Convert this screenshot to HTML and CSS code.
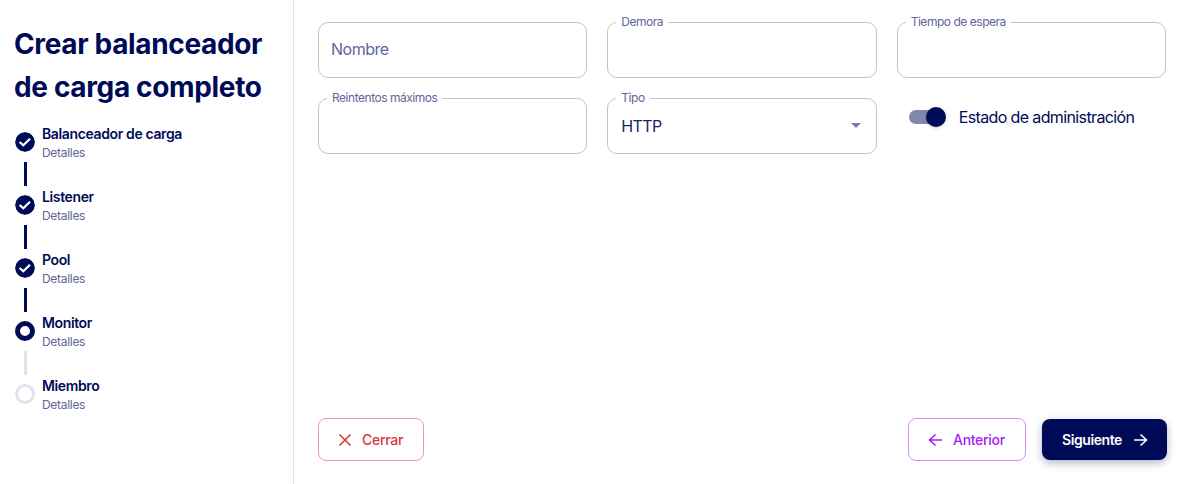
FILE: index.html
```html
<!DOCTYPE html>
<html lang="es">
<head>
<meta charset="utf-8">
<title>Crear balanceador de carga completo</title>
<link rel="stylesheet" href="styles.css">
</head>
<body>
<div class="app">
  <aside class="sidebar">
    <h1 class="title">Crear balanceador de carga completo</h1>
    <ol class="steps">
      <li class="step">
        <div class="step-head">
          <svg class="step-icon" viewBox="0 0 20 20"><circle cx="10" cy="10" r="10" fill="#000b58"/><path d="M4.6 10l3.7 3.3L15 6.8" fill="none" stroke="#fff" stroke-width="2.2"/></svg>
          <div class="step-text"><span class="step-name">Balanceador de carga</span><span class="step-sub">Detalles</span></div>
        </div>
        <div class="connector"></div>
      </li>
      <li class="step">
        <div class="step-head">
          <svg class="step-icon" viewBox="0 0 20 20"><circle cx="10" cy="10" r="10" fill="#000b58"/><path d="M4.6 10l3.7 3.3L15 6.8" fill="none" stroke="#fff" stroke-width="2.2"/></svg>
          <div class="step-text"><span class="step-name">Listener</span><span class="step-sub">Detalles</span></div>
        </div>
        <div class="connector"></div>
      </li>
      <li class="step">
        <div class="step-head">
          <svg class="step-icon" viewBox="0 0 20 20"><circle cx="10" cy="10" r="10" fill="#000b58"/><path d="M4.6 10l3.7 3.3L15 6.8" fill="none" stroke="#fff" stroke-width="2.2"/></svg>
          <div class="step-text"><span class="step-name">Pool</span><span class="step-sub">Detalles</span></div>
        </div>
        <div class="connector"></div>
      </li>
      <li class="step">
        <div class="step-head">
          <span class="step-icon ring-active"></span>
          <div class="step-text"><span class="step-name">Monitor</span><span class="step-sub">Detalles</span></div>
        </div>
        <div class="connector connector-muted"></div>
      </li>
      <li class="step">
        <div class="step-head">
          <span class="step-icon ring-idle"></span>
          <div class="step-text"><span class="step-name">Miembro</span><span class="step-sub">Detalles</span></div>
        </div>
      </li>
    </ol>
  </aside>
  <main class="main">
    <form class="form-grid">
      <fieldset class="field field-nolabel"><span class="placeholder">Nombre</span></fieldset>
      <fieldset class="field"><legend class="legend">Demora</legend></fieldset>
      <fieldset class="field"><legend class="legend">Tiempo de espera</legend></fieldset>
      <fieldset class="field"><legend class="legend">Reintentos máximos</legend></fieldset>
      <fieldset class="field field-select">
        <legend class="legend">Tipo</legend>
        <span class="value">HTTP</span>
        <svg class="caret" viewBox="0 0 10 5"><path d="M0 0h10L5 5z" fill="#7a7fa6"/></svg>
      </fieldset>
      <div class="toggle-row">
        <span class="toggle"><span class="toggle-track"></span><span class="toggle-thumb"></span></span>
        <span class="toggle-label">Estado de administración</span>
      </div>
    </form>
    <div class="actions">
      <button type="button" class="btn btn-close">
        <svg class="btn-icon" viewBox="0 0 14 14"><path d="M1.5 1.5l11 11M12.5 1.5l-11 11" fill="none" stroke="currentColor" stroke-width="1.6"/></svg>
        <span class="btn-text">Cerrar</span>
      </button>
      <div class="actions-right">
        <button type="button" class="btn btn-prev">
          <svg class="btn-icon" viewBox="0 0 14 14"><path d="M14 7H1.5M7.5 1.5L1.5 7l6 5.5" fill="none" stroke="currentColor" stroke-width="1.6"/></svg>
          <span class="btn-text">Anterior</span>
        </button>
        <button type="button" class="btn btn-next">
          <span class="btn-text">Siguiente</span>
          <svg class="btn-icon" viewBox="0 0 14 14"><path d="M0 7h12.5M6.5 1.5l6 5.5-6 5.5" fill="none" stroke="currentColor" stroke-width="1.6"/></svg>
        </button>
      </div>
    </div>
  </main>
</div>
</body>
</html>
```
FILE: styles.css
```css
* { box-sizing: border-box; }
html, body { margin: 0; height: 100%; }
body { font-family: Inter, "Liberation Sans", sans-serif; color: #000b58; background: #fff; }
.app { display: flex; height: 484px; overflow: hidden; }
.sidebar { width: 294px; flex: none; border-right: 1px solid #e3e3ec; padding: 23px 15px 0; }
.title { margin: 0 0 13px -1px; font-size: 28px; line-height: 43px; font-weight: 700; letter-spacing: -0.35px; }
.steps { list-style: none; margin: 0; padding: 0; }
.step-head { display: flex; align-items: center; gap: 7px; height: 40px; }
.step-icon { width: 20px; height: 20px; flex: none; display: block; border-radius: 50%; }
.ring-active { border: 5px solid #000b58; }
.ring-idle { border: 3px solid #e2e2ec; }
.step-text { display: flex; flex-direction: column; margin-top: 2px; }
.step-name { font-size: 14px; line-height: 20px; font-weight: 600; letter-spacing: -0.37px; }
.step-sub { font-size: 12px; line-height: 18px; color: #5f6599; letter-spacing: -0.3px; }
.connector { width: 3px; height: 24px; margin: 0 0 0 9px; background: #000b58; }
.connector-muted { background: #e2e2ec; }
.step:not(:last-child) { height: 63px; }
.main { flex: 1; min-width: 0; padding: 14px 15px 23px 24px; display: flex; flex-direction: column; justify-content: space-between; }
.form-grid { display: grid; grid-template-columns: repeat(3, 1fr); grid-auto-rows: 64px; column-gap: 20px; row-gap: 12px; margin-right: 1px; }
.field { margin: 0; padding: 0 13px 0 12px; min-width: 0; border: 1px solid #c4c4c4; border-radius: 10px; display: flex; align-items: center; }
.field-nolabel { margin-top: 8px; padding-bottom: 2px; }
.legend { padding: 0 5px; margin-left: -4px; font-size: 12px; line-height: 16px; color: #5f6599; letter-spacing: -0.47px; }
.placeholder { font-size: 16px; color: #5f6599; letter-spacing: -0.5px; }
.value { font-size: 16px; flex: 1; color: #1a2468; letter-spacing: -0.6px; margin: 0 0 8px 1px; }
.field-select { justify-content: space-between; }
.caret { width: 10px; height: 5px; margin: 0 2px 8px 0; }
.toggle-row { display: flex; align-items: center; gap: 12px; padding-left: 12px; margin-top: 7px; height: 40px; }
.toggle { width: 38px; height: 20px; display: flex; align-items: center; }
.toggle-track { width: 34px; height: 14px; border-radius: 7px; background: #8186aa; }
.toggle-thumb { width: 20px; height: 20px; border-radius: 50%; background: #000b58; margin-left: -17px; box-shadow: 0 1px 3px rgba(0,0,0,.2); }
.toggle-label { font-size: 16px; color: #000b58; letter-spacing: -0.62px; }
.actions { display: flex; justify-content: space-between; align-items: center; }
.actions-right { display: flex; align-items: center; gap: 16px; }
.btn { height: 43px; border-radius: 8px; background: #fff; font: 500 14px Inter, "Liberation Sans", sans-serif; letter-spacing: -0.3px; display: flex; align-items: center; gap: 10px; padding: 0 19px; cursor: pointer; }
.btn-icon { width: 14px; height: 14px; flex: none; }
.btn-text { margin-top: -1px; }
.btn-close { width: 106px; color: #d8373c; border: 1px solid #ee9a9a; }
.btn-prev { width: 118px; color: #a81cf5; border: 1px solid #d28cfb; gap: 11px; }
.btn-next { width: 125px; height: 41px; padding: 0 20px; color: #fff; background: #000b58; border: 0; font-weight: 600; letter-spacing: -0.42px; box-shadow: 0 3px 8px rgba(0,11,88,.3); gap: 12px; }
```
